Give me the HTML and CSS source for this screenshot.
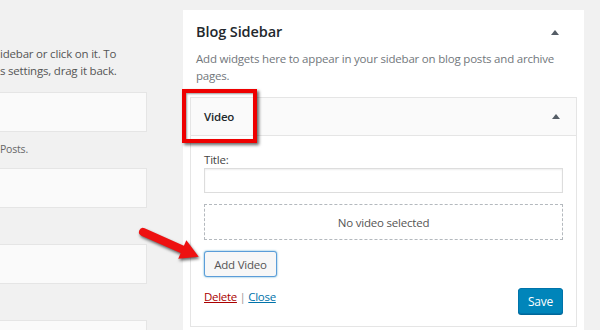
FILE: index.html
```html
<!DOCTYPE html>
<html>
<head>
<meta charset="utf-8">
<link rel="stylesheet" href="styles.css">
</head>
<body>
<div class="page">
  <div class="available">
    <p class="intro">idebar or click on it. To<br>s settings, drag it back.</p>
    <div class="widget-item">
      <div class="widget-top"></div>
      <div class="widget-desc">Posts.</div>
    </div>
    <div class="widget-item">
      <div class="widget-top"></div>
      <div class="widget-desc"></div>
    </div>
    <div class="widget-item">
      <div class="widget-top"></div>
      <div class="widget-desc"></div>
    </div>
    <div class="widget-item">
      <div class="widget-top widget-top-last"></div>
    </div>
  </div>

  <div class="sidebar">
    <div class="sidebar-head">
      <h2 class="sidebar-title">Blog Sidebar</h2>
      <span class="toggle"></span>
    </div>
    <p class="sidebar-desc">Add widgets here to appear in your sidebar on blog posts and archive pages.</p>

    <div class="widget">
      <div class="widget-head">
        <span class="widget-title">Video</span>
        <span class="toggle"></span>
      </div>
      <div class="widget-inside">
        <label class="field-label">Title:</label>
        <div class="text-input"></div>
        <div class="placeholder">No video selected</div>
        <button class="btn-secondary">Add Video</button>
        <div class="widget-actions">
          <div class="links"><a class="delete">Delete</a> <span class="sep">|</span> <a class="close">Close</a></div>
          <button class="btn-primary">Save</button>
        </div>
      </div>
    </div>
  </div>
</div>

<div class="highlight"></div>
<svg class="arrow" width="80" height="50" viewBox="0 0 80 50">
  <g transform="translate(9 12) rotate(24)">
    <line x1="0" y1="0" x2="46" y2="0" stroke="#ee1111" stroke-width="8" stroke-linecap="round"/>
    <polygon points="43,-10 61,0 43,10" fill="#ee1111"/>
  </g>
</svg>
</body>
</html>
```
FILE: styles.css
```css
html, body {
  margin: 0;
  padding: 0;
}
body {
  background: #f1f1f1;
  font-family: "Open Sans", "Noto Sans", sans-serif;
  font-size: 11.5px;
  letter-spacing: -0.2px;
  color: #444;
  width: 600px;
  height: 330px;
  overflow: hidden;
  position: relative;
}
.page {
  display: flex;
  align-items: flex-start;
  height: 330px;
  overflow: hidden;
}
.available {
  width: 147px;
  flex: none;
  margin-right: 36px;
}
.intro {
  margin: 45px 0 0;
  line-height: 17px;
  color: #555;
  white-space: nowrap;
}
.widget-item {
  display: flex;
  flex-direction: column;
}
.intro + .widget-item {
  margin-top: 13px;
}
.widget-top {
  height: 38px;
  background: #fafafa;
  border: 1px solid #e5e5e5;
  border-left: none;
}
.widget-top-last {
  height: 12px;
  border-bottom: none;
}
.widget-desc {
  height: 36px;
  line-height: 17px;
  padding-top: 9px;
  box-sizing: border-box;
  color: #666;
  font-size: 10.5px;
}

.sidebar {
  width: 401px;
  flex: none;
  margin-top: 10px;
  background: #fff;
  box-sizing: border-box;
  padding: 11px 7px 0;
  height: 320px;
}
.sidebar-head {
  display: flex;
  align-items: center;
  justify-content: space-between;
  padding: 0 18px 0 6px;
}
.sidebar-title {
  margin: 0;
  font-size: 14.5px;
  font-weight: 600;
  line-height: 22px;
  letter-spacing: -0.1px;
  color: #23282d;
}
.toggle {
  width: 0;
  height: 0;
  border-left: 4px solid transparent;
  border-right: 4px solid transparent;
  border-bottom: 5px solid #555d66;
}
.sidebar-desc {
  margin: 7px 0 0;
  padding: 0 6px;
  line-height: 17px;
  color: #72777c;
}
.widget {
  margin-top: 13px;
  border: 1px solid #e5e5e5;
}
.widget-head {
  height: 37px;
  background: #fafafa;
  border-bottom: 1px solid #e5e5e5;
  display: flex;
  align-items: center;
  justify-content: space-between;
  padding: 0 16px 0 13px;
}
.widget-title {
  font-weight: 600;
  font-size: 11.5px;
  color: #23282d;
}
.widget-inside {
  padding: 15px 13px 12px;
  display: flex;
  flex-direction: column;
  align-items: flex-start;
}
.field-label {
  line-height: 17px;
  color: #444;
}
.text-input {
  align-self: stretch;
  height: 23px;
  border: 1px solid #ddd;
  box-shadow: inset 0 1px 2px rgba(0,0,0,.07);
}
.placeholder {
  align-self: stretch;
  margin-top: 11px;
  height: 34px;
  border: 1px dashed #b4b9be;
  display: flex;
  align-items: center;
  justify-content: center;
  color: #555;
}
.btn-secondary {
  margin-top: 11px;
  height: 26px;
  width: 73px;
  padding: 0;
  font-family: inherit;
  font-size: 11.5px;
  letter-spacing: -0.2px;
  color: #555;
  background: #f7f7f7;
  border: 1px solid #5b9dd9;
  border-radius: 3px;
  box-shadow: 0 0 2px rgba(30,140,190,.8);
}
.widget-actions {
  align-self: stretch;
  margin-top: 11px;
  display: flex;
  justify-content: space-between;
  align-items: flex-start;
}
.links {
  line-height: 18px;
  letter-spacing: -0.3px;
}
.delete {
  color: #a00;
  text-decoration: underline;
}
.close {
  color: #0073aa;
  text-decoration: underline;
}
.sep {
  color: #999;
}
.btn-primary {
  height: 26px;
  width: 45px;
  padding: 0;
  font-family: inherit;
  font-size: 12px;
  letter-spacing: -0.2px;
  color: #fff;
  background: #0085ba;
  border: 1px solid #0073aa;
  border-radius: 3px;
  box-shadow: 0 1px 0 #006799;
}

.highlight {
  position: absolute;
  left: 182px;
  top: 89px;
  width: 67px;
  height: 46px;
  border: 4px solid #ee0000;
  box-shadow: 2px 2px 3px rgba(0,0,0,.6), inset 1px 1px 2px rgba(0,0,0,.4);
}
.arrow {
  position: absolute;
  left: 134px;
  top: 220px;
  filter: drop-shadow(1px 2px 1.5px rgba(0,0,0,.6));
}
```
